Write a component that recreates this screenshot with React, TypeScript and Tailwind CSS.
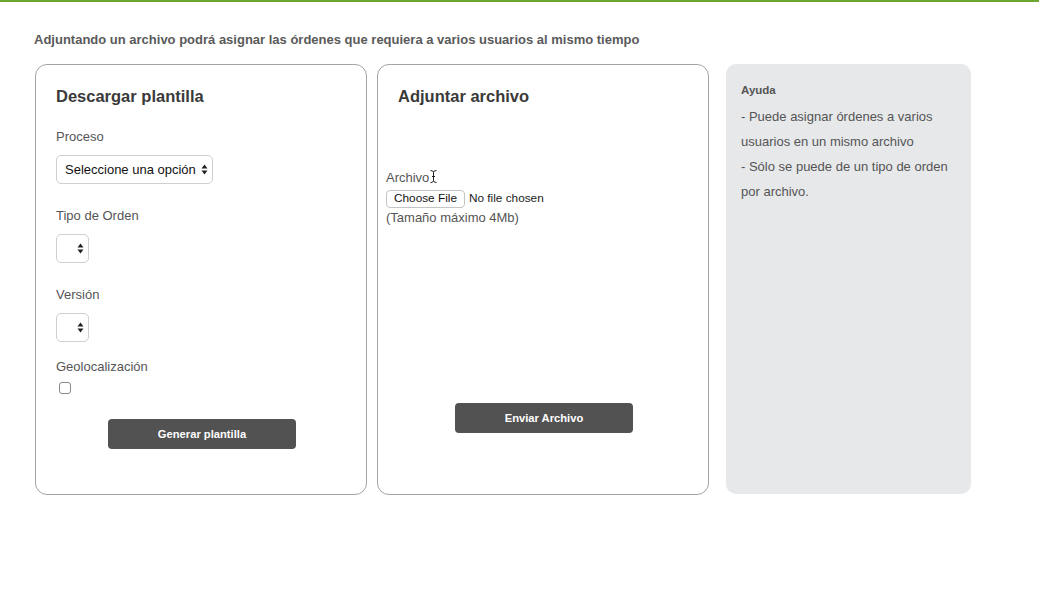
import React from "react";

function Arrows() {
  return (
    <svg width="7" height="11" viewBox="0 0 7 11" className="shrink-0">
      <path d="M3.5 0.5 L6.5 4.5 L0.5 4.5 Z" fill="#222" />
      <path d="M3.5 10.5 L6.5 6.5 L0.5 6.5 Z" fill="#222" />
    </svg>
  );
}

function Select({ text, width }: { text?: string; width: string }) {
  return (
    <div
      className={`${width} h-[29px] flex items-center justify-end gap-[4px] rounded-[5px] border border-[#cfcfcf] bg-white pl-[8px] pr-[4px] text-[13px] text-[#111]`}
    >
      {text ? <span className="flex-1 whitespace-nowrap">{text}</span> : null}
      <Arrows />
    </div>
  );
}

function Label({ children, className = "" }: { children: React.ReactNode; className?: string }) {
  return <div className={`text-[13px] leading-[20px] text-[#555] ${className}`}>{children}</div>;
}

export default function App() {
  return (
    <div
      className="min-h-[613px] w-[1039px] bg-white border-t-2 border-[#6ea530]"
      style={{ fontFamily: '"Liberation Sans", Arial, sans-serif' }}
    >
      <div className="pl-[34px] pt-[30px]">
        <div className="text-[13px] font-bold leading-[16px] text-[#5a5a5a]">
          Adjuntando un archivo podrá asignar las órdenes que requiera a varios usuarios al mismo tiempo
        </div>
        <div className="mt-[16px] flex items-start">
          {/* Card 1 */}
          <div className="ml-[1px] h-[431px] w-[332px] rounded-[12px] border border-[#a3a3a3] pl-[20px] pt-[21px]">
            <div className="text-[16.5px] font-bold leading-[20px] text-[#3a3a3a]">Descargar plantilla</div>
            <Label className="mt-[21px]">Proceso</Label>
            <div className="mt-[8px]">
              <Select text="Seleccione una opción" width="w-[157px]" />
            </div>
            <Label className="mt-[22px]">Tipo de Orden</Label>
            <div className="mt-[8px]">
              <Select width="w-[33px]" />
            </div>
            <Label className="mt-[22px]">Versión</Label>
            <div className="mt-[8px]">
              <Select width="w-[33px]" />
            </div>
            <Label className="mt-[15px]">Geolocalización</Label>
            <div className="mt-[5px] ml-[3px] h-[12px] w-[12px] rounded-[3px] border border-[#8a8a8a] bg-white" />
            <div className="mt-[25px] ml-[52px] flex h-[30px] w-[188px] items-center justify-center rounded-[4px] bg-[#525252] text-[11.2px] font-bold text-white">
              Generar plantilla
            </div>
          </div>

          {/* Card 2 */}
          <div className="ml-[10px] h-[431px] w-[332px] rounded-[12px] border border-[#a3a3a3] pl-[8px] pt-[21px]">
            <div className="pl-[12px] text-[16.5px] font-bold leading-[20px] text-[#3a3a3a]">Adjuntar archivo</div>
            <div className="mt-[62px] flex items-center text-[13px] leading-[20px] text-[#555]">
              <span>Archivo</span>
              <svg width="7" height="13" viewBox="0 0 7 13" className="ml-[1px] mt-[-4px]">
                <path d="M0.5 0.5 Q3.5 0.5 3.5 2.5 Q3.5 0.5 6.5 0.5 M3.5 2.5 V10.5 M0.5 12.5 Q3.5 12.5 3.5 10.5 Q3.5 12.5 6.5 12.5 M2 6.5 H5" stroke="#222" strokeWidth="1" fill="none" />
              </svg>
            </div>
            <div className="mt-[2px] flex h-[18px] items-center text-[11.8px] text-[#222]">
              <div className="flex h-[18px] items-center rounded-[4px] border border-[#c4c4c4] bg-white px-[7px] text-[11.8px] text-[#111]">
                Choose File
              </div>
              <span className="ml-[4px]">No file chosen</span>
            </div>
            <div className="mt-[1px] text-[13px] leading-[18px] text-[#555]">(Tamaño máximo 4Mb)</div>
            <div className="mt-[176px] ml-[69px] flex h-[30px] w-[178px] items-center justify-center rounded-[4px] bg-[#525252] text-[11.2px] font-bold text-white">
              Enviar Archivo
            </div>
          </div>

          {/* Card 3 */}
          <div className="ml-[17px] h-[430px] w-[245px] rounded-[10px] bg-[#e7e8ea] pl-[15px] pt-[18px]">
            <div className="text-[11.5px] font-bold leading-[16px] text-[#555]">Ayuda</div>
            <div className="mt-[6px] text-[13px] leading-[25px] text-[#555]">
              <div>- Puede asignar órdenes a varios</div>
              <div>usuarios en un mismo archivo</div>
              <div>- Sólo se puede de un tipo de orden</div>
              <div>por archivo.</div>
            </div>
          </div>
        </div>
      </div>
    </div>
  );
}
